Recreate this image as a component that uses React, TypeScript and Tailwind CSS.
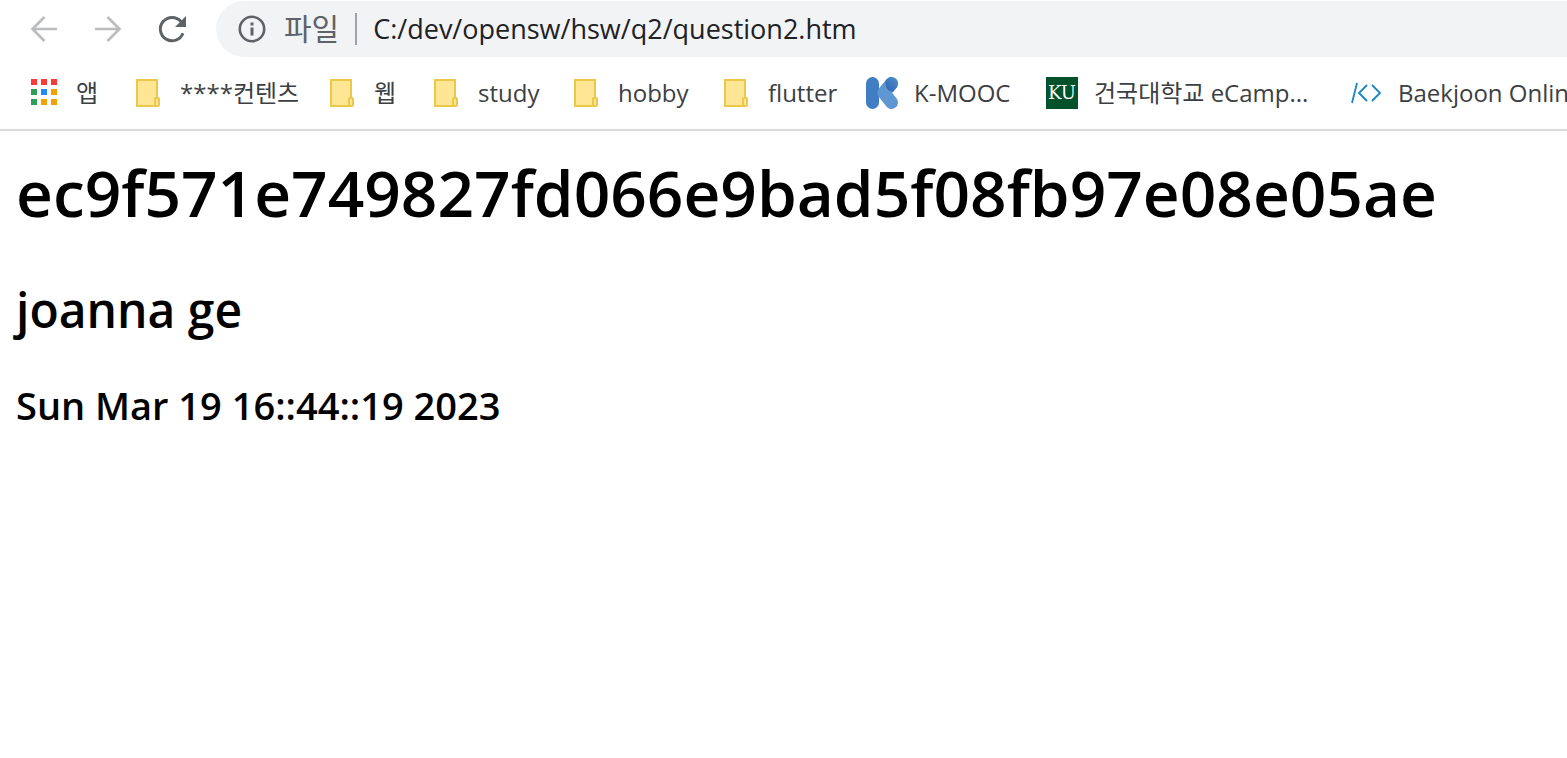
import type { ReactNode } from "react";

const appColors = [
  "#f93a37", "#f93a37", "#f93a37",
  "#2f9e58", "#1f8bf5", "#f0a202",
  "#2f9e58", "#f0a202", "#f0a202",
];

function AppsIcon() {
  return (
    <svg viewBox="0 0 32 32" className="size-8 shrink-0" aria-hidden="true">
      {appColors.map((color, i) => (
        <rect key={i} x={3 + (i % 3) * 10} y={2 + Math.floor(i / 3) * 10} width="6" height="6" fill={color} />
      ))}
    </svg>
  );
}

function FolderIcon() {
  return (
    <svg viewBox="0 0 32 32" className="size-8 shrink-0" aria-hidden="true">
      <path d="M5 3H25V29H5Z" fill="#ffe694" stroke="#ebc84a" strokeWidth="2" />
      <rect x="23" y="21" width="4" height="8" rx="1" fill="#ffe694" stroke="#ebc84a" strokeWidth="2" />
    </svg>
  );
}

function MoocIcon() {
  return (
    <svg viewBox="0 0 32 32" className="size-8 shrink-0" aria-hidden="true">
      <defs>
        <linearGradient id="mooc-tip" x1="0.2" y1="0.9" x2="0.8" y2="0.1">
          <stop offset="0" stopColor="#3169b3" />
          <stop offset="1" stopColor="#4c88ca" />
        </linearGradient>
      </defs>
      <rect x="0" y="0" width="13" height="32" rx="6.5" fill="#407dc2" />
      <path d="M18 15.500L25.500 6.500M18 16L25.500 25.500" stroke="#5f97d3" strokeWidth="13" strokeLinecap="round" />
      <path d="M19.200 5A6.500 6.500 0 0 1 32 6.500Q32 9 30.500 10.700L27 15Q19.500 14 19.200 5Z" fill="url(#mooc-tip)" />
    </svg>
  );
}

function KonkukIcon() {
  return (
    <span className="flex size-8 shrink-0 items-center justify-center bg-[#00522b] font-['DejaVu_Serif',serif] text-[18px] text-white">
      KU
    </span>
  );
}

function BaekjoonIcon() {
  return (
    <svg viewBox="0 0 32 32" className="size-8 shrink-0" fill="none" stroke="#1a82c9" strokeWidth="1.800" aria-hidden="true">
      <path d="M7 6L2 26" />
      <path d="M17 8L9 16L17 24" />
      <path d="M22 8L30 16L22 24" />
    </svg>
  );
}

const bookmarks: { label: string; icon: ReactNode }[] = [
  { label: "앱", icon: <AppsIcon /> },
  { label: "****컨텐츠", icon: <FolderIcon /> },
  { label: "웹", icon: <FolderIcon /> },
  { label: "study", icon: <FolderIcon /> },
  { label: "hobby", icon: <FolderIcon /> },
  { label: "flutter", icon: <FolderIcon /> },
  { label: "K-MOOC", icon: <MoocIcon /> },
  { label: "건국대학교 eCamp...", icon: <KonkukIcon /> },
  { label: "Baekjoon Online", icon: <BaekjoonIcon /> },
];

function Toolbar() {
  return (
    <div className="flex h-14 items-center">
      <div className="flex w-[216px] shrink-0 items-center gap-8 pl-7">
        <button type="button" aria-label="뒤로" className="text-[#babcbe]">
          <svg viewBox="0 0 32 32" className="size-8" fill="none" stroke="currentColor" strokeWidth="2.600" aria-hidden="true">
            <path d="M29 16H5M16.500 4L4.500 16L16.500 28" />
          </svg>
        </button>
        <button type="button" aria-label="앞으로" className="text-[#babcbe]">
          <svg viewBox="0 0 32 32" className="size-8" fill="none" stroke="currentColor" strokeWidth="2.600" aria-hidden="true">
            <path d="M3 16H27M15.500 4L27.500 16L15.500 28" />
          </svg>
        </button>
        <button type="button" aria-label="새로고침" className="text-[#5f6368]">
          <svg viewBox="0 0 32 32" className="size-8" aria-hidden="true">
            <path d="M27 20.300A11.700 11.700 0 1 1 25 8.500" fill="none" stroke="currentColor" strokeWidth="3" />
            <path d="M30 3V14H19Z" fill="currentColor" />
          </svg>
        </button>
      </div>
      <div className="flex h-14 min-w-0 flex-1 items-center rounded-l-full bg-[#f1f3f4] pl-5">
        <svg viewBox="0 0 32 32" className="size-8 shrink-0 text-[#5f6368]" aria-hidden="true">
          <circle cx="16" cy="16" r="12.200" fill="none" stroke="currentColor" strokeWidth="2.600" />
          <path d="M14.500 9.500H17.500V12.500H14.500ZM14.500 14.500H17.500V22.500H14.500Z" fill="currentColor" />
        </svg>
        <span className="ml-4 text-[30px] leading-8 text-[#5f6368]">파일</span>
        <span className="ml-4 h-8 w-0.5 shrink-0 bg-[#9fa2a6]" />
        <input
          type="text"
          aria-label="주소"
          defaultValue="C:/dev/opensw/hsw/q2/question2.htm"
          className="ml-4 min-w-0 flex-1 bg-transparent text-[27px] leading-8 text-[#202124] outline-none"
        />
      </div>
    </div>
  );
}

export default function App() {
  return (
    <div className="min-h-screen overflow-hidden bg-white font-['Open_Sans','Noto_Sans_CJK_KR',sans-serif]">
      <header className="border-b-2 border-[#dadbdc] pt-px">
        <Toolbar />
        <nav
          aria-label="북마크"
          className="grid h-[72px] grid-cols-[104px_194px_104px_140px_150px_146px_180px_304px_auto] items-center overflow-hidden pl-7"
        >
          {bookmarks.map((item) => (
            <a
              key={item.label}
              href="#"
              className="flex items-center gap-4 text-[24px] leading-8 whitespace-nowrap text-[#3c4043]"
            >
              {item.icon}
              <span>{item.label}</span>
            </a>
          ))}
        </nav>
      </header>
      <main className="px-4 pt-[18px] font-semibold text-black">
        <h1 className="text-[64px] leading-[88px]">ec9f571e749827fd066e9bad5f08fb97e08e05ae</h1>
        <h2 className="mt-10 text-[48px] leading-[66px]">joanna ge</h2>
        <h3 className="mt-9 text-[38px] leading-[52px]">Sun Mar 19 16::44::19 2023</h3>
      </main>
    </div>
  );
}
